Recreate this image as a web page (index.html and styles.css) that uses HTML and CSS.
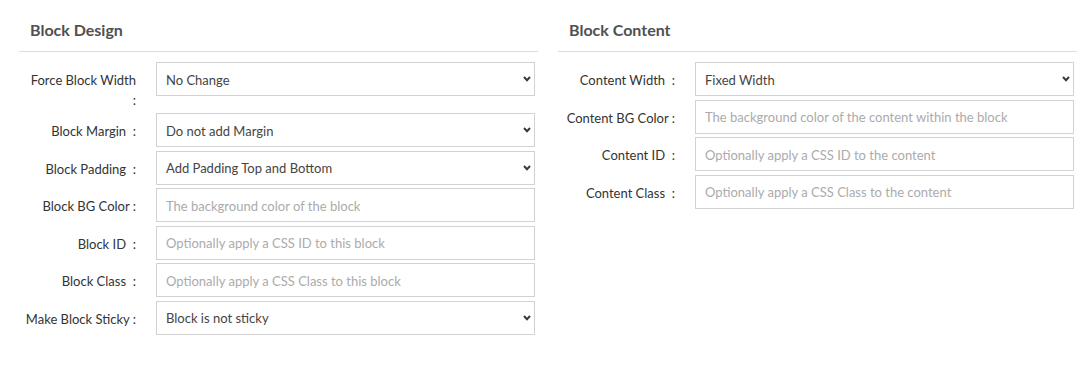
FILE: index.html
```html
<!DOCTYPE html>
<html lang="en">
<head>
<meta charset="utf-8">
<title>Block Settings</title>
<link rel="stylesheet" href="styles.css">
</head>
<body>
<div class="page">
  <section class="panel">
    <h2 class="panel-title">Block Design</h2>
    <div class="row row-tall">
      <label class="lbl">Force Block Width<br>:</label>
      <div class="field sel">
        <select><option>No Change</option><option>Full Width</option></select>
        <svg class="chev" width="8" height="6" viewBox="0 0 8 6"><polyline points="1,1 4,4.2 7,1" fill="none" stroke="#3a3a3a" stroke-width="2"/></svg>
      </div>
    </div>
    <div class="row">
      <label class="lbl">Block Margin&nbsp; :</label>
      <div class="field sel">
        <select><option>Do not add Margin</option></select>
        <svg class="chev" width="8" height="6" viewBox="0 0 8 6"><polyline points="1,1 4,4.2 7,1" fill="none" stroke="#3a3a3a" stroke-width="2"/></svg>
      </div>
    </div>
    <div class="row">
      <label class="lbl">Block Padding&nbsp; :</label>
      <div class="field sel">
        <select><option>Add Padding Top and Bottom</option></select>
        <svg class="chev" width="8" height="6" viewBox="0 0 8 6"><polyline points="1,1 4,4.2 7,1" fill="none" stroke="#3a3a3a" stroke-width="2"/></svg>
      </div>
    </div>
    <div class="row">
      <label class="lbl">Block BG Color :</label>
      <div class="field"><input type="text" placeholder="The background color of the block"></div>
    </div>
    <div class="row">
      <label class="lbl">Block ID&nbsp; :</label>
      <div class="field"><input type="text" placeholder="Optionally apply a CSS ID to this block"></div>
    </div>
    <div class="row">
      <label class="lbl">Block Class&nbsp; :</label>
      <div class="field"><input type="text" placeholder="Optionally apply a CSS Class to this block"></div>
    </div>
    <div class="row">
      <label class="lbl">Make Block Sticky :</label>
      <div class="field sel">
        <select><option>Block is not sticky</option></select>
        <svg class="chev" width="8" height="6" viewBox="0 0 8 6"><polyline points="1,1 4,4.2 7,1" fill="none" stroke="#3a3a3a" stroke-width="2"/></svg>
      </div>
    </div>
  </section>

  <section class="panel">
    <h2 class="panel-title">Block Content</h2>
    <div class="row">
      <label class="lbl">Content Width&nbsp; :</label>
      <div class="field sel">
        <select><option>Fixed Width</option></select>
        <svg class="chev" width="8" height="6" viewBox="0 0 8 6"><polyline points="1,1 4,4.2 7,1" fill="none" stroke="#3a3a3a" stroke-width="2"/></svg>
      </div>
    </div>
    <div class="row">
      <label class="lbl">Content BG Color :</label>
      <div class="field"><input type="text" placeholder="The background color of the content within the block"></div>
    </div>
    <div class="row">
      <label class="lbl">Content ID&nbsp; :</label>
      <div class="field"><input type="text" placeholder="Optionally apply a CSS ID to the content"></div>
    </div>
    <div class="row">
      <label class="lbl">Content Class&nbsp; :</label>
      <div class="field"><input type="text" placeholder="Optionally apply a CSS Class to the content"></div>
    </div>
  </section>
</div>
</body>
</html>
```

FILE: styles.css
```css
html, body {
  margin: 0;
  padding: 0;
  background: #fff;
}

body {
  font-family: Lato, "Open Sans", "Liberation Sans", sans-serif;
  font-size: 13px;
  color: #333;
}

.page {
  display: flex;
  gap: 20px;
  padding-left: 19px;
}

.panel {
  width: 519px;
  flex: none;
}

.panel-title {
  margin: 0 0 10px;
  padding: 20px 11px 11px;
  font-size: 16px;
  line-height: 20px;
  font-weight: 700;
  color: #505050;
  border-bottom: 1px solid #dcdcdc;
}

.row {
  display: grid;
  grid-template-columns: 117px 379px;
  column-gap: 20px;
  margin-bottom: 3.5px;
  align-items: start;
}

.row-tall {
  margin-bottom: 3px;
}

.lbl {
  text-align: right;
  white-space: nowrap;
  padding-top: 8px;
  line-height: 20px;
  color: #333;
}

.field {
  position: relative;
  height: 34px;
}

.field select,
.field input {
  box-sizing: border-box;
  width: 100%;
  height: 34px;
  margin: 0;
  border: 1px solid #d2d2d2;
  border-radius: 0;
  background: #fff;
  font-family: inherit;
  font-size: 13px;
  color: #444;
  padding: 1px 9px 0;
  outline: none;
}

.field select {
  -webkit-appearance: none;
  appearance: none;
  padding-right: 24px;
}

.field input::placeholder {
  color: #ababab;
  opacity: 1;
}

.chev {
  position: absolute;
  right: 4px;
  top: 14px;
  pointer-events: none;
}
```
